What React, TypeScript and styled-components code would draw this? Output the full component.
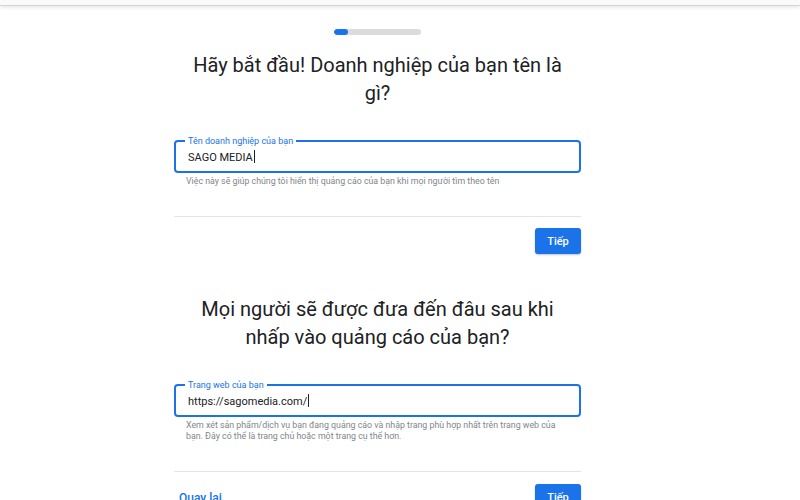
import React from "react";
import styled, { createGlobalStyle } from "styled-components";

const GlobalStyle = createGlobalStyle`
  html, body {
    margin: 0;
    padding: 0;
    background: #ffffff;
    font-family: Roboto, "Noto Sans", Arial, sans-serif;
    overflow: hidden;
  }
`;

const Page = styled.div`
  width: 800px;
  height: 500px;
  overflow: hidden;
  background: #fff;
`;

const TopBar = styled.div`
  height: 5px;
  background: #fafafa;
  border-bottom: 1px solid #d6d6d6;
  box-shadow: 0 1px 4px rgba(0, 0, 0, 0.12);
`;

const Column = styled.div`
  width: 407px;
  margin-left: 174px;
  display: flex;
  flex-direction: column;
`;

const Progress = styled.div`
  align-self: center;
  width: 87px;
  height: 6px;
  margin-top: 23px;
  border-radius: 3px;
  background: #dadce0;
  overflow: hidden;
`;

const ProgressFill = styled.div`
  height: 100%;
  border-radius: 3px;
  background: #1a73e8;
`;

const Heading = styled.h1<{ $top: number }>`
  margin: ${(p) => p.$top}px 0 0;
  padding: 0 10px;
  font-size: 20px;
  line-height: 28px;
  font-weight: 400;
  color: #202124;
  text-align: center;
`;

const Field = styled.div<{ $top: number }>`
  margin-top: ${(p) => p.$top}px;
  height: 33px;
  box-sizing: border-box;
  padding: 0 12px;
  border: 2px solid #1a73e8;
  border-radius: 4px;
  display: flex;
  align-items: center;
  position: relative;
`;

const FloatLabel = styled.span`
  position: absolute;
  top: -6px;
  left: 9px;
  padding: 0 3px;
  background: #fff;
  font-size: 9px;
  line-height: 10px;
  color: #1a73e8;
`;

const FieldValue = styled.span`
  font-size: 11px;
  color: #202124;
  margin-top: 1px;
`;

const Caret = styled.span`
  display: inline-block;
  width: 1px;
  height: 13px;
  background: #202124;
  vertical-align: -2px;
  margin-left: 1px;
`;

const Helper = styled.p`
  margin: 3px 0 0;
  padding: 0 12px 0 12px;
  font-size: 8.8px;
  line-height: 11px;
  color: #80868b;
`;

const Divider = styled.hr<{ $top: number }>`
  margin: ${(p) => p.$top}px 0 0;
  border: none;
  border-top: 1px solid #e3e4e6;
`;

const Actions = styled.div<{ $top: number }>`
  margin-top: ${(p) => p.$top}px;
  display: flex;
  align-items: center;
  justify-content: space-between;
`;

const BackLink = styled.a`
  font-size: 12px;
  font-weight: 500;
  color: #1a73e8;
  margin-left: 5px;
  margin-top: 1px;
  text-decoration: none;
`;

const NextButton = styled.button`
  margin-left: auto;
  width: 46px;
  height: 26px;
  border: none;
  border-radius: 3px;
  background: #1a73e8;
  color: #fff;
  font-family: Roboto, Arial, sans-serif;
  font-size: 11px;
  font-weight: 500;
  box-shadow: 0 1px 2px rgba(60, 64, 67, 0.3);
  padding: 0;
`;

export default function App() {
  return (
    <Page>
      <GlobalStyle />
      <TopBar />
      <Column>
        <Progress>
          <ProgressFill style={{ width: `${(14 / 87) * 100}%` }} />
        </Progress>

        <Heading $top={16}>Hãy bắt đầu! Doanh nghiệp của bạn tên là gì?</Heading>
        <Field $top={33}>
          <FloatLabel>Tên doanh nghiệp của bạn</FloatLabel>
          <FieldValue>
            SAGO MEDIA
            <Caret />
          </FieldValue>
        </Field>
        <Helper>Việc này sẽ giúp chúng tôi hiển thị quảng cáo của bạn khi mọi người tìm theo tên</Helper>
        <Divider $top={29} />
        <Actions $top={11}>
          <NextButton>Tiếp</NextButton>
        </Actions>

        <Heading $top={41}>Mọi người sẽ được đưa đến đâu sau khi nhấp vào quảng cáo của bạn?</Heading>
        <Field $top={33}>
          <FloatLabel>Trang web của bạn</FloatLabel>
          <FieldValue>
            https://sagomedia.com/
            <Caret />
          </FieldValue>
        </Field>
        <Helper>
          Xem xét sản phẩm/dịch vụ bạn đang quảng cáo và nhập trang phù hợp nhất trên trang web của bạn. Đây có
          thể là trang chủ hoặc một trang cụ thể hơn.
        </Helper>
        <Divider $top={29} />
        <Actions $top={12}>
          <BackLink href="#">Quay lại</BackLink>
          <NextButton>Tiếp</NextButton>
        </Actions>
      </Column>
    </Page>
  );
}
